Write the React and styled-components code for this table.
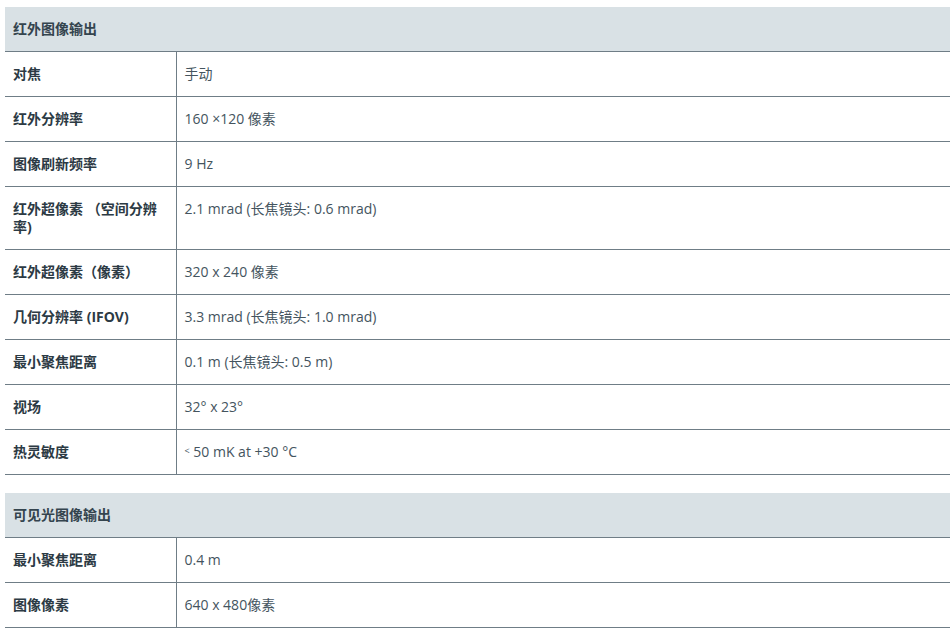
import React from "react";
import styled, { createGlobalStyle } from "styled-components";

const Global = createGlobalStyle`
  html, body { margin: 0; padding: 0; background: #ffffff; }
  body { font-family: "Open Sans", "Noto Sans CJK SC", sans-serif; }
`;

const Page = styled.div`
  padding: 7px 0 0 5px;
  display: flex;
  flex-direction: column;
  gap: 18px;
  width: 945px;
`;

const Table = styled.table`
  width: 945px;
  border-collapse: collapse;
  table-layout: fixed;
  font-family: "Open Sans", "Noto Sans CJK SC", sans-serif;
  font-size: 14px;
  line-height: 18px;
`;

const HeadCell = styled.th`
  background: #d9e1e5;
  color: #34444e;
  font-weight: 700;
  text-align: left;
  padding: 13px 8px;
  border-bottom: 1px solid #6f7d86;
`;

const Label = styled.td`
  padding: 13px 8px;
  vertical-align: top;
  color: #2c3a44;
  font-weight: 700;
  border-right: 1px solid #6f7d86;
  border-bottom: 1px solid #6f7d86;
`;

const Value = styled.td`
  padding: 13px 8px;
  vertical-align: top;
  color: #44545e;
  font-weight: 400;
  border-bottom: 1px solid #6f7d86;
`;

const Small = styled.span`
  font-size: 9px;
  line-height: 0;
  position: relative;
  top: -3px;
`;

const ir = [
  ["对焦", "手动"],
  ["红外分辨率", "160 ×120 像素"],
  ["图像刷新频率", "9 Hz"],
  ["红外超像素 （空间分辨率)", "2.1 mrad (长焦镜头: 0.6 mrad)"],
  ["红外超像素（像素）", "320 x 240 像素"],
  ["几何分辨率 (IFOV)", "3.3 mrad (长焦镜头: 1.0 mrad)"],
  ["最小聚焦距离", "0.1 m (长焦镜头: 0.5 m)"],
  ["视场", "32° x 23°"],
  ["热灵敏度", <><Small>&lt;</Small> 50 mK at +30 °C</>],
];

const vis = [
  ["最小聚焦距离", "0.4 m"],
  ["图像像素", "640 x 480像素"],
];

function Spec({ title, rows }) {
  return (
    <Table>
      <colgroup>
        <col style={{ width: 171 }} />
        <col />
      </colgroup>
      <thead>
        <tr>
          <HeadCell colSpan={2}>{title}</HeadCell>
        </tr>
      </thead>
      <tbody>
        {rows.map(([k, v]) => (
          <tr key={k}>
            <Label>{k}</Label>
            <Value>{v}</Value>
          </tr>
        ))}
      </tbody>
    </Table>
  );
}

export default function App() {
  return (
    <>
      <Global />
      <Page>
        <Spec title="红外图像输出" rows={ir} />
        <Spec title="可见光图像输出" rows={vis} />
      </Page>
    </>
  );
}
